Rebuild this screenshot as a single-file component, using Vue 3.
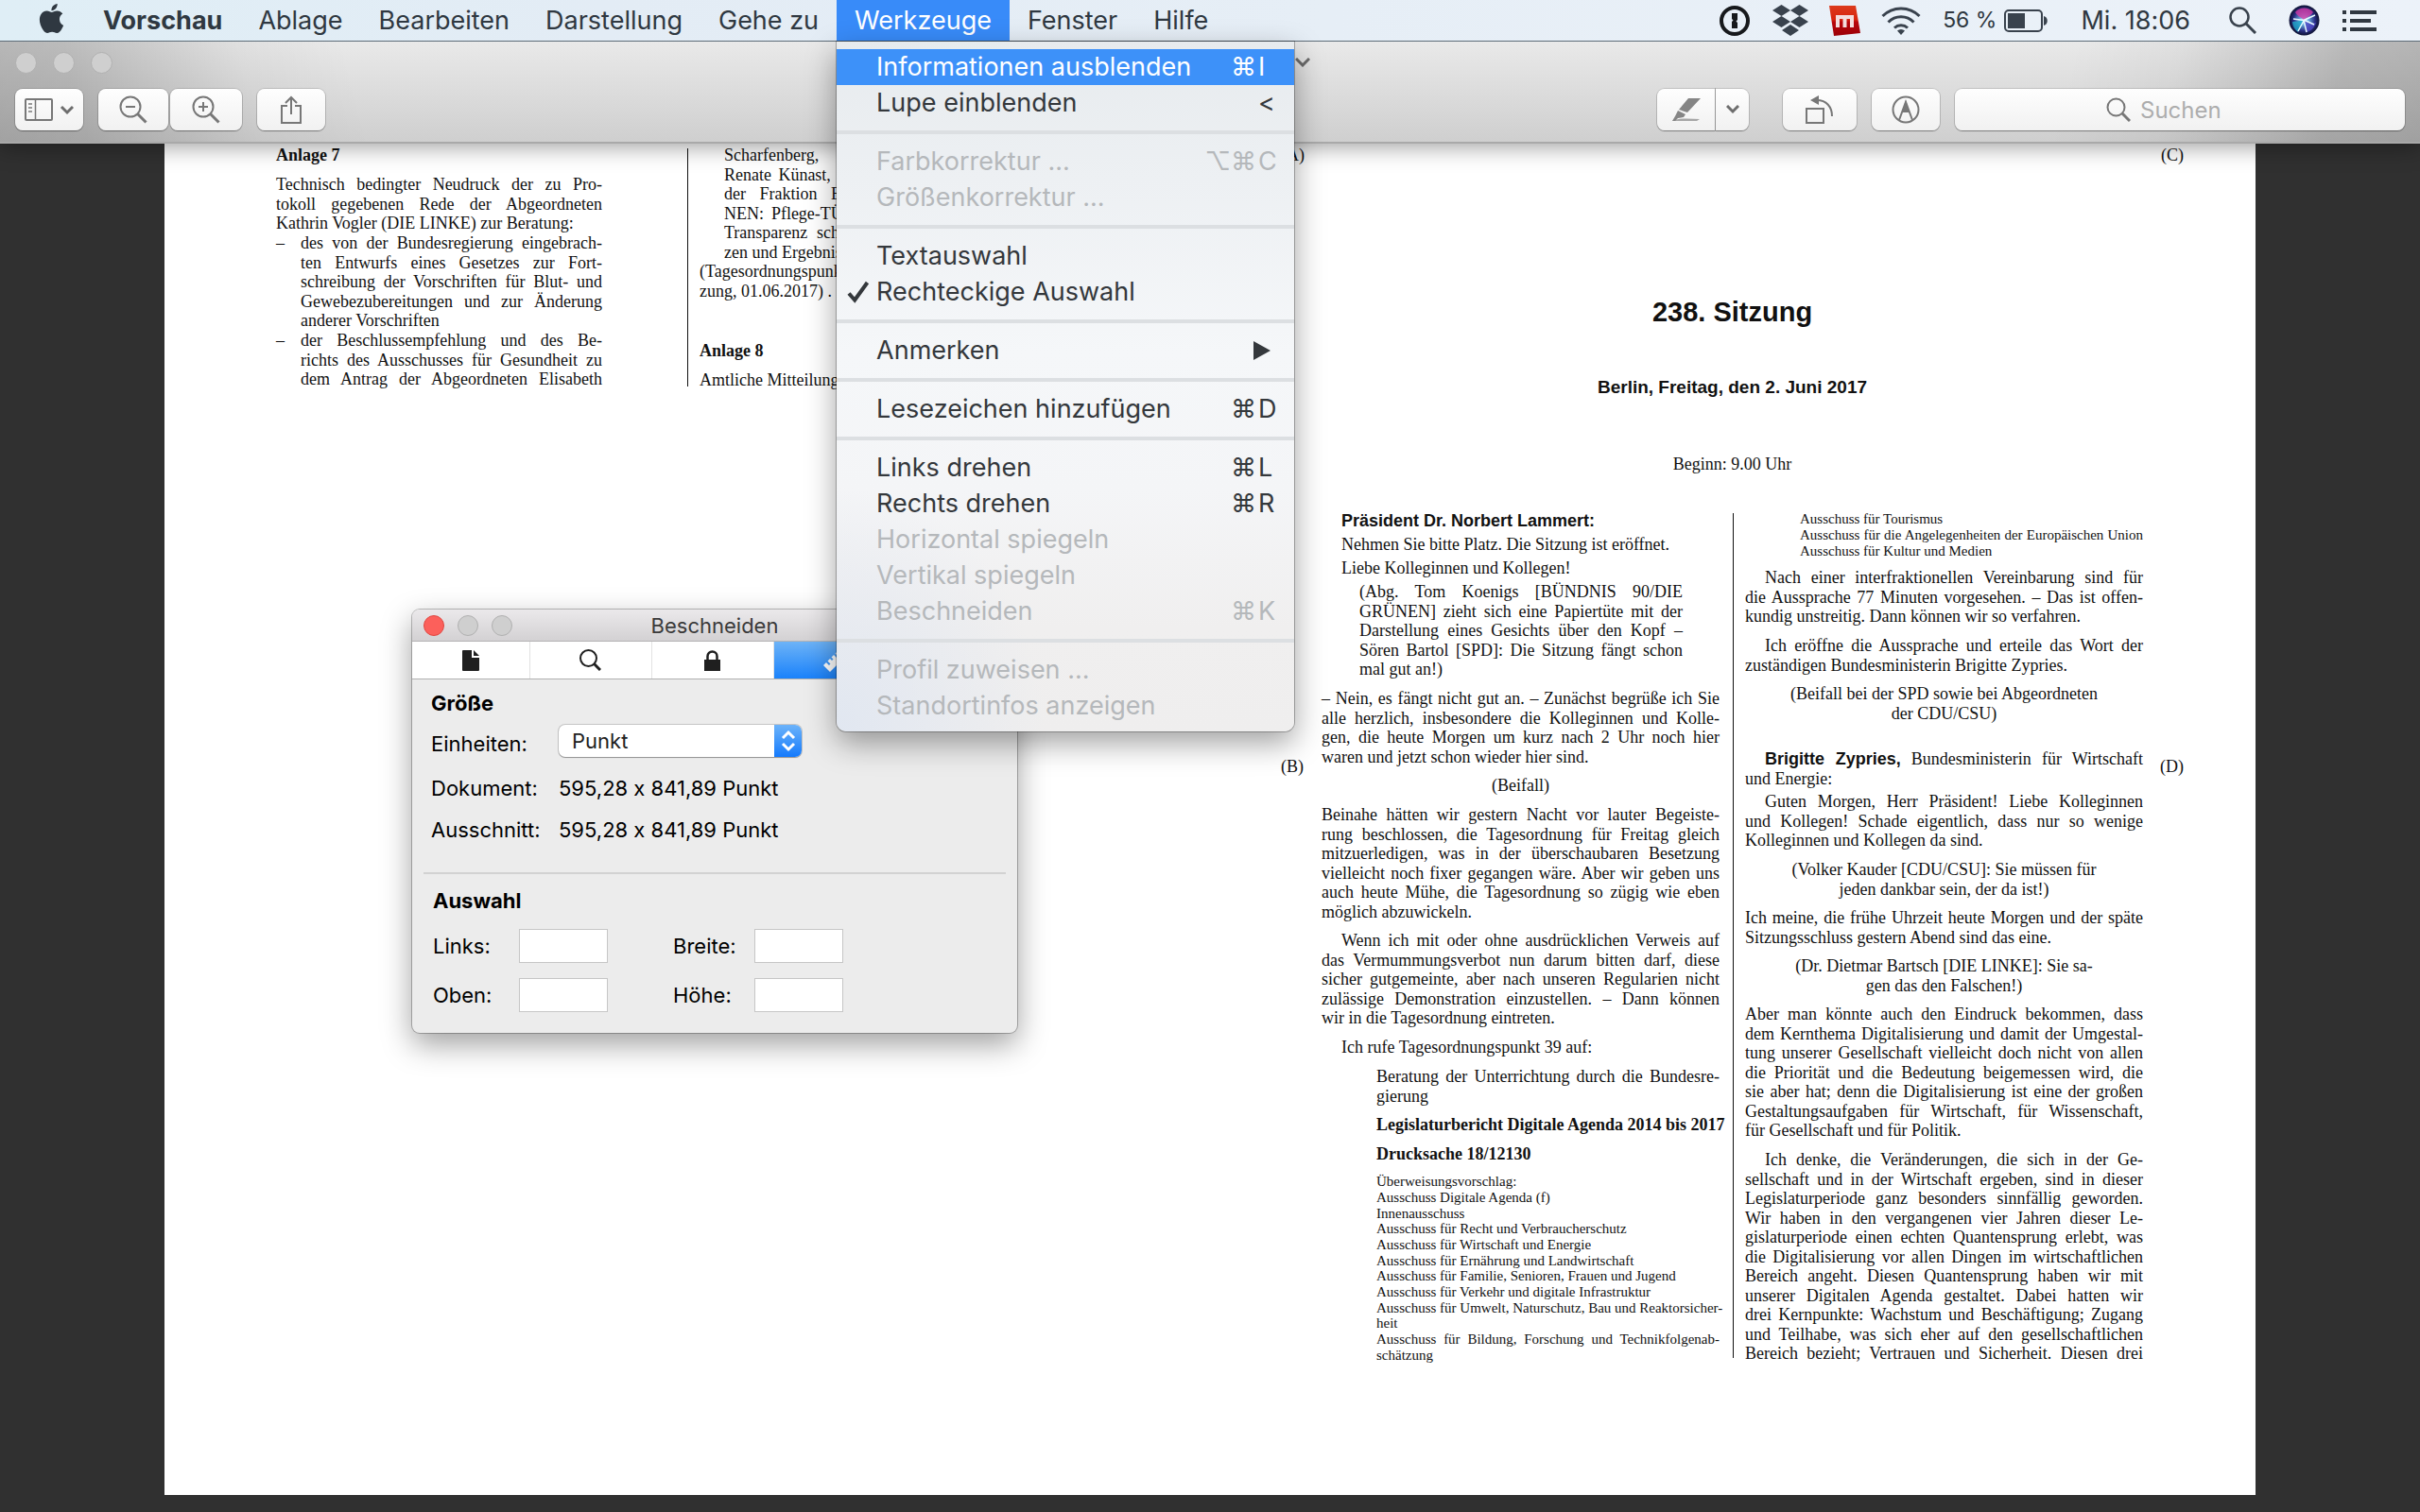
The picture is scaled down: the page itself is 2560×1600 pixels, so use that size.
<script setup>
import { ref } from 'vue'

const full = (text) => ({ text, full: true })

const menusBefore = ['Ablage', 'Bearbeiten', 'Darstellung', 'Gehe zu']
const menusAfter = ['Fenster', 'Hilfe']

const menuGroups = [
  [
    { label: 'Informationen ausblenden', mods: '⌘', key: 'I', active: true },
    { label: 'Lupe einblenden', key: '<' },
  ],
  [
    { label: 'Farbkorrektur ...', mods: '⌥⌘', key: 'C', disabled: true },
    { label: 'Größenkorrektur ...', disabled: true },
  ],
  [{ label: 'Textauswahl' }, { label: 'Rechteckige Auswahl', checked: true }],
  [{ label: 'Anmerken', submenu: true }],
  [{ label: 'Lesezeichen hinzufügen', mods: '⌘', key: 'D' }],
  [
    { label: 'Links drehen', mods: '⌘', key: 'L' },
    { label: 'Rechts drehen', mods: '⌘', key: 'R' },
    { label: 'Horizontal spiegeln', disabled: true },
    { label: 'Vertikal spiegeln', disabled: true },
    { label: 'Beschneiden', mods: '⌘', key: 'K', disabled: true },
  ],
  [
    { label: 'Profil zuweisen ...', disabled: true },
    { label: 'Standortinfos anzeigen', disabled: true },
  ],
]

const annexLeft = [
  { kind: 'strong', lines: ['Anlage 7'] },
  {
    kind: 'text',
    lines: [
      'Technisch bedingter Neudruck der zu Pro-',
      'tokoll gegebenen Rede der Abgeordneten',
      'Kathrin Vogler (DIE LINKE) zur Beratung:',
    ],
  },
  {
    kind: 'dash',
    lines: [
      'des von der Bundesregierung eingebrach-',
      'ten Entwurfs eines Gesetzes zur Fort-',
      'schreibung der Vorschriften für Blut- und',
      'Gewebezubereitungen und zur Änderung',
      'anderer Vorschriften',
    ],
  },
  {
    kind: 'dash',
    lines: [
      'der Beschlussempfehlung und des Be-',
      'richts des Ausschusses für Gesundheit zu',
      full('dem Antrag der Abgeordneten Elisabeth'),
    ],
  },
]

const annexRight = [
  {
    kind: 'inset',
    lines: [
      'Scharfenberg, Maria Klein-Schmeink,',
      'Renate Künast, weiterer Abgeordneter und',
      'der Fraktion BÜNDNIS 90/DIE GRÜ-',
      'NEN: Pflege-TÜV hat ausgedient – Echte',
      'Transparenz schaffen: Pflegenoten ausset-',
      'zen und Ergebnisqualität voranbringen',
    ],
  },
  { kind: 'flush', lines: ['(Tagesordnungspunkt 25 a, 237. Sit-', 'zung, 01.06.2017) . . . . . .'] },
  { kind: 'strong annex', lines: ['Anlage 8'] },
  { kind: 'text', lines: ['Amtliche Mitteilungen'] },
]

const columnLeft = [
  { kind: 'name', lines: ['Präsident Dr. Norbert Lammert:'] },
  { kind: 'indent tight', lines: ['Nehmen Sie bitte Platz. Die Sitzung ist eröffnet.'] },
  { kind: 'indent tight', lines: ['Liebe Kolleginnen und Kollegen!'] },
  {
    kind: 'aside tight',
    lines: [
      '(Abg. Tom Koenigs [BÜNDNIS 90/DIE',
      'GRÜNEN] zieht sich eine Papiertüte mit der',
      'Darstellung eines Gesichts über den Kopf –',
      'Sören Bartol [SPD]: Die Sitzung fängt schon',
      'mal gut an!)',
    ],
  },
  {
    kind: 'text',
    lines: [
      '– Nein, es fängt nicht gut an. – Zunächst begrüße ich Sie',
      'alle herzlich, insbesondere die Kolleginnen und Kolle-',
      'gen, die heute Morgen um kurz nach 2 Uhr noch hier',
      'waren und jetzt schon wieder hier sind.',
    ],
  },
  { kind: 'call', lines: ['(Beifall)'] },
  {
    kind: 'text',
    lines: [
      'Beinahe hätten wir gestern Nacht vor lauter Begeiste-',
      'rung beschlossen, die Tagesordnung für Freitag gleich',
      'mitzuerledigen, was in der überschaubaren Besetzung',
      'vielleicht noch fixer gegangen wäre. Aber wir geben uns',
      'auch heute Mühe, die Tagesordnung so zügig wie eben',
      'möglich abzuwickeln.',
    ],
  },
  {
    kind: 'indent',
    lines: [
      'Wenn ich mit oder ohne ausdrücklichen Verweis auf',
      'das Vermummungsverbot nun darum bitten darf, diese',
      'sicher gutgemeinte, aber nach unseren Regularien nicht',
      'zulässige Demonstration einzustellen. – Dann können',
      'wir in die Tagesordnung eintreten.',
    ],
  },
  { kind: 'indent', lines: ['Ich rufe Tagesordnungspunkt 39 auf:'] },
  { kind: 'item', lines: ['Beratung der Unterrichtung durch die Bundesre-', 'gierung'] },
  { kind: 'item strong', lines: [full('Legislaturbericht Digitale Agenda 2014 bis 2017')] },
  { kind: 'item strong', lines: ['Drucksache 18/12130'] },
  {
    kind: 'item small',
    lines: [
      'Überweisungsvorschlag:',
      'Ausschuss Digitale Agenda (f)',
      'Innenausschuss',
      'Ausschuss für Recht und Verbraucherschutz',
      'Ausschuss für Wirtschaft und Energie',
      'Ausschuss für Ernährung und Landwirtschaft',
      'Ausschuss für Familie, Senioren, Frauen und Jugend',
      'Ausschuss für Verkehr und digitale Infrastruktur',
      full('Ausschuss für Umwelt, Naturschutz, Bau und Reaktorsicher-'),
      'heit',
      full('Ausschuss für Bildung, Forschung und Technikfolgenab-'),
      'schätzung',
    ],
  },
]

const columnRight = [
  {
    kind: 'item small',
    lines: [
      'Ausschuss für Tourismus',
      full('Ausschuss für die Angelegenheiten der Europäischen Union'),
      'Ausschuss für Kultur und Medien',
    ],
  },
  {
    kind: 'indent',
    lines: [
      'Nach einer interfraktionellen Vereinbarung sind für',
      'die Aussprache 77 Minuten vorgesehen. – Das ist offen-',
      'kundig unstreitig. Dann können wir so verfahren.',
    ],
  },
  {
    kind: 'indent',
    lines: [
      'Ich eröffne die Aussprache und erteile das Wort der',
      'zuständigen Bundesministerin Brigitte Zypries.',
    ],
  },
  { kind: 'call', lines: ['(Beifall bei der SPD sowie bei Abgeordneten', 'der CDU/CSU)'] },
  {
    kind: 'indent speaker',
    lines: [
      { name: 'Brigitte Zypries,', text: 'Bundesministerin für Wirtschaft' },
      'und Energie:',
    ],
  },
  {
    kind: 'indent tight',
    lines: [
      'Guten Morgen, Herr Präsident! Liebe Kolleginnen',
      'und Kollegen! Schade eigentlich, dass nur so wenige',
      'Kolleginnen und Kollegen da sind.',
    ],
  },
  { kind: 'call', lines: ['(Volker Kauder [CDU/CSU]: Sie müssen für', 'jeden dankbar sein, der da ist!)'] },
  {
    kind: 'text',
    lines: [
      'Ich meine, die frühe Uhrzeit heute Morgen und der späte',
      'Sitzungsschluss gestern Abend sind das eine.',
    ],
  },
  { kind: 'call', lines: ['(Dr. Dietmar Bartsch [DIE LINKE]: Sie sa-', 'gen das den Falschen!)'] },
  {
    kind: 'text',
    lines: [
      'Aber man könnte auch den Eindruck bekommen, dass',
      'dem Kernthema Digitalisierung und damit der Umgestal-',
      'tung unserer Gesellschaft vielleicht doch nicht von allen',
      'die Priorität und die Bedeutung beigemessen wird, die',
      'sie aber hat; denn die Digitalisierung ist eine der großen',
      'Gestaltungsaufgaben für Wirtschaft, für Wissenschaft,',
      'für Gesellschaft und für Politik.',
    ],
  },
  {
    kind: 'indent',
    lines: [
      'Ich denke, die Veränderungen, die sich in der Ge-',
      'sellschaft und in der Wirtschaft ergeben, sind in dieser',
      'Legislaturperiode ganz besonders sinnfällig geworden.',
      'Wir haben in den vergangenen vier Jahren dieser Le-',
      'gislaturperiode einen echten Quantensprung erlebt, was',
      'die Digitalisierung vor allen Dingen im wirtschaftlichen',
      'Bereich angeht. Diesen Quantensprung haben wir mit',
      'unserer Digitalen Agenda gestaltet. Dabei hatten wir',
      'drei Kernpunkte: Wachstum und Beschäftigung; Zugang',
      'und Teilhabe, was sich eher auf den gesellschaftlichen',
      full('Bereich bezieht; Vertrauen und Sicherheit. Diesen drei'),
    ],
  },
]

const unit = ref('Punkt')
const selection = ref({ left: '', width: '', top: '', height: '' })
const query = ref('')
</script>

<template>
  <div class="desktop">
    <header class="menubar">
      <nav class="menus" aria-label="Menüleiste">
        <button class="apple" aria-label="Apple">
          <svg width="31" height="31" viewBox="0 0 24 24" fill="currentColor"><path d="M12.152 6.896c-.948 0-2.415-1.078-3.96-1.04-2.04.027-3.91 1.183-4.961 3.014-2.117 3.675-.546 9.103 1.519 12.09 1.013 1.454 2.208 3.09 3.792 3.039 1.52-.065 2.09-.987 3.935-.987 1.831 0 2.35.987 3.96.948 1.637-.026 2.676-1.48 3.676-2.948 1.156-1.688 1.636-3.325 1.662-3.415-.039-.013-3.182-1.221-3.22-4.857-.026-3.04 2.48-4.494 2.597-4.559-1.429-2.09-3.623-2.324-4.39-2.376-2-.156-3.675 1.09-4.61 1.09zM15.53 3.83c.843-1.012 1.4-2.427 1.245-3.83-1.207.052-2.662.805-3.532 1.818-.78.896-1.454 2.338-1.273 3.714 1.338.104 2.715-.688 3.559-1.701" /></svg>
        </button>
        <button class="menu app-name">Vorschau</button>
        <button v-for="m in menusBefore" :key="m" class="menu">{{ m }}</button>
        <div class="open-menu">
          <button class="menu is-open">Werkzeuge</button>
          <div class="dropdown" role="menu">
            <div v-for="(group, g) in menuGroups" :key="g" class="group" role="group">
              <button
                v-for="item in group"
                :key="item.label"
                class="entry"
                :class="{ active: item.active }"
                :disabled="item.disabled"
                role="menuitem"
              >
                <span class="mark">
                  <svg v-if="item.checked" width="24" height="24" viewBox="0 0 24 24" fill="none" stroke="currentColor" stroke-width="4"><path d="M2 13.500l6.200 7L21.500 2" /></svg>
                </span>
                <span class="label">{{ item.label }}</span>
                <span class="mods">{{ item.mods }}</span>
                <span class="key">
                  <svg v-if="item.submenu" class="arrow" width="18" height="20" viewBox="0 0 18 20" fill="currentColor"><path d="M0 0l18 10L0 20z" /></svg>
                  <template v-else>{{ item.key }}</template>
                </span>
              </button>
            </div>
          </div>
        </div>
        <button v-for="m in menusAfter" :key="m" class="menu">{{ m }}</button>
      </nav>
      <div class="status">
        <svg class="s-pass" width="32" height="32" viewBox="0 0 32 32"><circle cx="16" cy="16" r="14" fill="none" stroke="#17191c" stroke-width="4" /><path d="M13 8h6v7l-1.500 1.500L19 18v6h-6v-7l1.500-1.500L13 14z" fill="#17191c" /></svg>
        <svg class="s-box" width="38" height="34" viewBox="0 0 38 34" fill="#39424d"><path d="M9.500 0L19 6l-9.500 6L0 6zM28.500 0L38 6l-9.500 6L19 6zM9.500 12L19 18l-9.500 6L0 18zM28.500 12L38 18l-9.500 6L19 18zM19 21l9 6-9 6-9-6z" /></svg>
        <svg class="s-red" width="33" height="32" viewBox="0 0 33 32"><defs><linearGradient id="redbox" x1="0" y1="0" x2="0" y2="1"><stop offset="0" stop-color="#dc3a1c" /><stop offset=".45" stop-color="#d8260f" /><stop offset=".55" stop-color="#b8060b" /><stop offset="1" stop-color="#9c0007" /></linearGradient></defs><path d="M0 0h28l5 29-28 3z" fill="url(#redbox)" /><path d="M9 23V12h15v11M16.500 12v11" fill="none" stroke="#f3dede" stroke-width="4" /></svg>
        <svg class="s-wifi" width="42" height="30" viewBox="0 0 42 30" fill="none" stroke="#39424d" stroke-width="3"><path d="M1.500 10a27.500 27.500 0 0 1 39 0M7.500 16.500a19 19 0 0 1 27 0M14 22.500a10.500 10.500 0 0 1 14 0" /><path d="M17 25.500a6 6 0 0 1 8 0L21 30z" fill="#39424d" stroke="none" /></svg>
        <span class="percent">56 %</span>
        <svg class="s-bat" width="46" height="24" viewBox="0 0 46 24"><rect x="1" y="1" width="39" height="22" rx="4" fill="none" stroke="#39424d" stroke-width="2" /><rect x="4" y="4" width="18" height="16" fill="#39424d" /><path d="M42 7c5 1 5 9 0 10z" fill="#39424d" /></svg>
        <span class="clock">Mi. 18:06</span>
        <svg class="s-find" width="29" height="29" viewBox="0 0 29 29" fill="none" stroke="#39424d"><circle cx="11" cy="11" r="9.500" stroke-width="2.500" /><path d="M18 18l10 10" stroke-width="3" /></svg>
        <svg class="s-siri" width="33" height="33" viewBox="0 0 33 33"><defs><radialGradient id="siri" cx=".5" cy=".5" r=".5"><stop offset="0" stop-color="#fff" /><stop offset=".25" stop-color="#6fb7e6" /><stop offset=".7" stop-color="#2a2f86" /><stop offset="1" stop-color="#0c1030" /></radialGradient></defs><circle cx="16.500" cy="16.500" r="16" fill="url(#siri)" /><path d="M7 8C11 2 22 2 26 8c-3 4-7 6-10 8-3-3-7-4-9-8z" fill="#d23aa5" opacity=".8" /><path d="M4 18c4 0 8-1 12-2-1 5-3 9-6 13-4-3-6-7-6-11z" fill="#1fa8c9" opacity=".8" /><path d="M16 16c3 3 9 4 13 3-2 6-6 9-10 10-1-4-2-8-3-13z" fill="#4f49c4" opacity=".8" /><path d="M5 15l11 1.500L28 11M16 17l-6 11M16 16l3 13M16 16l11 5" fill="none" stroke="#e8fbff" stroke-width="1.500" /></svg>
        <svg class="s-list" width="36" height="22" viewBox="0 0 36 22" fill="#303841"><path d="M0 0h4v4H0zM8 0h28v4H8zM0 9h4v4H0zM8 9h22v4H8zM0 18h4v4H0zM8 18h28v4H8z" /></svg>
      </div>
    </header>

    <div class="toolbar">
      <div class="title-row">
        <div class="lights"><i></i><i></i><i></i></div>
        <button class="doc-title" aria-label="Dokumenttitel">
          <svg width="16" height="10" viewBox="0 0 16 10" fill="none" stroke="#6b6b6b" stroke-width="3"><path d="M1 1l7 7 7-7" /></svg>
        </button>
      </div>
      <div class="tools">
        <button class="tool w-side" aria-label="Seitenleiste">
          <svg width="52" height="26" viewBox="0 0 52 26" fill="none" stroke="#777"><rect x="1" y="2" width="28" height="22" rx="1" stroke-width="2" /><path d="M11.500 2v22" stroke-width="1.500" /><path d="M4 7h4M4 11h4M4 15h4" stroke-width="2" stroke="#999" /><path d="M39 10l6 6 6-6" stroke-width="3" stroke="#6d6d6d" /></svg>
        </button>
        <button class="tool w-out" aria-label="Verkleinern">
          <svg width="30" height="30" viewBox="0 0 30 30" fill="none" stroke="#777" stroke-width="2"><circle cx="12" cy="12" r="10.500" /><path d="M7 12h10" /><path d="M19.500 19.500l9 9" stroke-width="3" /></svg>
        </button>
        <button class="tool w-in" aria-label="Vergrößern">
          <svg width="30" height="30" viewBox="0 0 30 30" fill="none" stroke="#777" stroke-width="2"><circle cx="12" cy="12" r="10.500" /><path d="M7 12h10M12 7v10" /><path d="M19.500 19.500l9 9" stroke-width="3" /></svg>
        </button>
        <button class="tool w-share" aria-label="Teilen">
          <svg width="24" height="30" viewBox="0 0 24 30" fill="none" stroke="#777" stroke-width="2"><path d="M8 11H2v18h20V11h-6M12 20V2M6 8l6-6 6 6" /></svg>
        </button>
        <span class="grow"></span>
        <div class="split">
          <button class="tool w-pen" aria-label="Hervorheben">
            <svg width="32" height="26" viewBox="0 0 32 26" fill="#858585"><path d="M18 1h13L17 16l-9-3zM7 14l8 4-2 3-6 1-3 3H1l3-5z" /><path d="M1 25c10-4 20-2 29-2l-3 2z" opacity=".7" /></svg>
          </button>
          <button class="tool w-drop" aria-label="Farbe wählen">
            <svg width="14" height="10" viewBox="0 0 14 10" fill="none" stroke="#6d6d6d" stroke-width="3"><path d="M1 1l6 6 6-6" /></svg>
          </button>
        </div>
        <button class="tool w-rot" aria-label="Drehen">
          <svg width="30" height="30" viewBox="0 0 30 30" fill="none" stroke="#777" stroke-width="2"><rect x="1" y="14" width="18" height="15" /><path d="M12 5c10 0 16 7 16 17" /><path d="M14 0v10L5 5z" fill="#777" stroke="none" /></svg>
        </button>
        <button class="tool w-mark" aria-label="Markieren">
          <svg width="30" height="30" viewBox="0 0 30 30" fill="none" stroke="#777" stroke-width="2"><circle cx="15" cy="15" r="13.500" /><path d="M8 26l7-19 7 19" /><path d="M15 5l4 13h-8z" fill="#777" stroke="none" /></svg>
        </button>
        <label class="tool search">
          <svg width="26" height="26" viewBox="0 0 26 26" fill="none" stroke="#777" stroke-width="2"><circle cx="10.500" cy="10.500" r="9" /><path d="M17 17l8 8" stroke-width="3" /></svg>
          <input v-model="query" type="text" placeholder="Suchen" aria-label="Suchen" />
        </label>
      </div>
    </div>

    <main class="viewer">
      <div class="spread">
        <section class="annex">
          <div class="column">
            <div v-for="(p, i) in annexLeft" :key="i" class="para" :class="p.kind">
              <span v-for="(l, j) in p.lines" :key="j" class="line" :class="{ full: l.full }">{{ l.text ?? l }}</span>
            </div>
          </div>
          <div class="rule"></div>
          <div class="column">
            <div v-for="(p, i) in annexRight" :key="i" class="para" :class="p.kind">
              <span v-for="(l, j) in p.lines" :key="j" class="line" :class="{ full: l.full }">{{ l.text ?? l }}</span>
            </div>
          </div>
        </section>

        <section class="protocol">
          <span class="margin">(A)</span>
          <div class="heading">
            <h1>238. Sitzung</h1>
            <h2>Berlin, Freitag, den 2. Juni 2017</h2>
            <p>Beginn: 9.00 Uhr</p>
          </div>
          <span class="margin right">(C)</span>
          <span class="margin lower">(B)</span>
          <div class="column">
            <div v-for="(p, i) in columnLeft" :key="i" class="para" :class="p.kind">
              <span v-for="(l, j) in p.lines" :key="j" class="line" :class="{ full: l.full }">{{ l.text ?? l }}</span>
            </div>
          </div>
          <div class="rule"></div>
          <div class="column">
            <div v-for="(p, i) in columnRight" :key="i" class="para" :class="p.kind">
              <span v-for="(l, j) in p.lines" :key="j" class="line" :class="{ full: l.full }"><b v-if="l.name">{{ l.name }}</b>{{ l.name ? ' ' : '' }}{{ l.text ?? l }}</span>
            </div>
          </div>
          <span class="margin lower right">(D)</span>
        </section>
      </div>
    </main>

    <section class="inspector" aria-label="Beschneiden">
      <header class="caption">
        <div class="lights"><i class="close"></i><i></i><i></i></div>
        <span>Beschneiden</span>
      </header>
      <div class="tabs">
        <button aria-label="Allgemein">
          <svg width="18" height="22" viewBox="0 0 18 22" fill="#1f1f1f"><path d="M1 0h9v8h8v13a1 1 0 0 1-1 1H1a1 1 0 0 1-1-1V1a1 1 0 0 1 1-1z" /><path d="M12 0l6 6h-6z" /></svg>
        </button>
        <button aria-label="Suche">
          <svg width="23" height="23" viewBox="0 0 23 23" fill="none" stroke="#1f1f1f"><circle cx="9.500" cy="9.500" r="8.500" stroke-width="2" /><path d="M15.500 15.500l6.500 6.500" stroke-width="3" /></svg>
        </button>
        <button aria-label="Verschlüsselung">
          <svg width="17" height="22" viewBox="0 0 17 22"><rect y="10" width="17" height="12" fill="#1f1f1f" /><path d="M3.500 11V6.500a5 5 0 0 1 10 0V11" fill="none" stroke="#1f1f1f" stroke-width="2.500" /></svg>
        </button>
        <button class="current" aria-label="Beschneiden">
          <svg width="26" height="26" viewBox="0 0 26 26" fill="#fff"><path d="M1 18l3-3 3 3 1.500-1.500-3-3L8 11l2 2 1.500-1.500-2-2L12 7l3 3 1.500-1.500-3-3L18 1l7 7L8 25z" /></svg>
        </button>
        <button aria-label="Anmerkungen"></button>
      </div>
      <div class="pane">
        <h3>Größe</h3>
        <div class="field first">
          <label for="unit">Einheiten:</label>
          <span class="picker">
            <select id="unit" v-model="unit"><option>Punkt</option></select>
            <svg width="29" height="34" viewBox="0 0 29 34" fill="none" stroke="#fff" stroke-width="3"><path d="M9 14l6-6 6 6M9 20l6 6 6-6" /></svg>
          </span>
        </div>
        <div class="field"><span>Dokument:</span><span>595,28 x 841,89 Punkt</span></div>
        <div class="field"><span>Ausschnitt:</span><span>595,28 x 841,89 Punkt</span></div>
        <hr />
        <h3 class="inner">Auswahl</h3>
        <div class="bounds">
          <label for="b-left">Links:</label><input id="b-left" v-model="selection.left" type="text" />
          <label for="b-width">Breite:</label><input id="b-width" v-model="selection.width" type="text" />
          <label for="b-top">Oben:</label><input id="b-top" v-model="selection.top" type="text" />
          <label for="b-height">Höhe:</label><input id="b-height" v-model="selection.height" type="text" />
        </div>
      </div>
    </section>
  </div>
</template>

<style>
body {
  background: #303030;
}
</style>

<style scoped>
* {
  box-sizing: border-box;
}

.desktop {
  position: relative;
  display: flex;
  flex-direction: column;
  min-height: 100vh;
  overflow: hidden;
  font-family: Inter, "Liberation Sans", sans-serif;
  font-variant-ligatures: no-contextual;
}

button,
input,
select {
  margin: 0;
  padding: 0;
  border: 0;
  background: none;
  color: inherit;
  font: inherit;
}

svg {
  display: block;
  flex: none;
}

h1,
h2,
h3,
p {
  margin: 0;
}

/* Menu bar */
.menubar {
  position: relative;
  z-index: 3;
  display: flex;
  justify-content: space-between;
  height: 44px;
  border-bottom: 1px solid #5d6c78;
  background: linear-gradient(90deg, #dfeef6, #e3ecf5 25%, #e6eef6 55%, #ecf2f9);
  color: #2f3841;
  font-size: 27px;
  line-height: 43px;
}

.menus,
.status {
  display: flex;
}

.apple {
  width: 90px;
  padding: 4px 0 0 39px;
  display: flex;
}

.menu {
  height: 43px;
  padding: 0 19px;
  white-space: nowrap;
}

.app-name {
  font-weight: 700;
}

.is-open {
  background: #388bf9;
  color: #fff;
}

.open-menu {
  position: relative;
}

.dropdown {
  position: absolute;
  top: 44px;
  left: 0;
  width: 484px;
  padding: 8px 0;
  border-radius: 0 0 10px 10px;
  background:
    radial-gradient(ellipse 220px 260px at 0 100%, #e1e7f1, #e1e7f100),
    linear-gradient(#e7ebee, #edf0f3 20%, #f5f7f9 45%, #f4f5f7 65%, #f0efef 85%, #efeeee);
  box-shadow: 0 0 0 1px #00000045, 0 12px 32px #00000060;
  color: #34383c;
}

.group + .group {
  margin-top: 10px;
  padding-top: 10px;
  border-top: 4px solid #dcdfe2;
}

.entry {
  display: flex;
  align-items: center;
  width: 100%;
  height: 38px;
  line-height: 38px;
  text-align: left;
}

.entry.active {
  background: #3d91f9;
  color: #fff;
}

.entry:disabled {
  color: #b5b8bb;
}

.mark {
  width: 42px;
  padding-left: 11px;
}

.label {
  flex: 1;
  white-space: nowrap;
}

.key {
  width: 38px;
}

.mods {
  padding-right: 2px;
}

.arrow {
  margin-left: -5px;
}

.status {
  align-items: center;
  padding-right: 46px;
}

.s-box { margin-left: 24px; }
.s-red { margin-left: 22px; }
.s-wifi { margin-left: 22px; }
.percent {
  margin-left: 23px;
  font-size: 23px;
}
.s-bat { margin-left: 8px; }
.clock { margin-left: 35px; }
.s-find { margin-left: 41px; }
.s-siri { margin-left: 34px; }
.s-list { margin-left: 24px; }

/* Window toolbar */
.toolbar {
  position: relative;
  z-index: 1;
  height: 108px;
  border-bottom: 2px solid #a9a9a9;
  background:
    linear-gradient(75deg, #00000038, #00000032 90px, #0000001c 190px, #0000000a 270px, #0000 380px),
    linear-gradient(285deg, #0000003a, #00000034 100px, #0000001c 190px, #0000000a 270px, #0000 380px),
    linear-gradient(#e9e9e9, #cfcfcf);
  box-shadow: 0 2px 24px #0000006b;
}

.title-row {
  display: grid;
  grid-template-columns: 1fr 212px 1fr;
  align-items: center;
  height: 44px;
  margin-bottom: 6px;
}

.lights {
  display: flex;
  gap: 17px;
  padding-left: 16px;
}

.lights i {
  width: 23px;
  height: 23px;
  border: 1px solid #b0b0b0;
  border-radius: 50%;
  background: #cfcfcf;
}

.doc-title {
  display: flex;
  justify-content: flex-end;
}

.tools {
  display: flex;
  padding: 0 16px;
}

.tool {
  display: flex;
  align-items: center;
  justify-content: center;
  height: 44px;
  border-radius: 8px;
  background: linear-gradient(#fefefe, #f1f1f1);
  box-shadow: 0 0 0 1px #00000022, 0 1px 1px #00000050;
}

.w-side { width: 72px; }
.w-out { width: 74px; margin-left: 16px; }
.w-in { width: 76px; margin-left: 2px; }
.w-share { width: 72px; margin-left: 16px; }
.w-rot { width: 78px; margin-left: 36px; }
.w-mark { width: 72px; margin-left: 16px; }

.grow {
  flex: 1;
}

.split {
  display: flex;
  gap: 1px;
}

.w-pen {
  width: 61px;
  border-radius: 8px 0 0 8px;
}

.w-drop {
  width: 35px;
  border-radius: 0 8px 8px 0;
}

.search {
  width: 476px;
  margin-left: 16px;
  gap: 10px;
}

.search input {
  width: 120px;
  outline: 0;
  font-size: 24px;
}

.search input::placeholder {
  color: #adadad;
  opacity: 1;
}

/* Document */
.viewer {
  display: flex;
  flex: 1;
  padding: 0 174px 18px;
  background: #303030;
}

.spread {
  display: flex;
  flex: 1;
  justify-content: space-between;
  align-items: flex-start;
  padding: 2px 76px 0 118px;
  background: #fff;
  color: #111;
  font-family: "Liberation Serif", serif;
  font-size: 18px;
  line-height: 21px;
}

.annex {
  display: grid;
  grid-template-columns: 345px 103px 345px;
}

.protocol {
  display: grid;
  grid-template-columns: 43px 421px 27px 421px 43px;
}

.rule {
  border-left: 1px solid #111;
}

.annex .rule {
  margin: 3px 0 4px 90px;
}

.protocol .rule {
  margin: 2px 0 6px 14px;
}

.heading {
  grid-column: span 3;
  padding: 159px 0 39px;
  text-align: center;
}

.heading h1 {
  font: 700 29px/34px "Liberation Sans", sans-serif;
}

.heading h2 {
  margin: 52px 0 61px;
  font: 700 19px/21px "Liberation Sans", sans-serif;
}

.margin.right {
  text-align: right;
}

.margin.lower {
  padding-top: 260px;
}

.para {
  margin-top: 10px;
}

.para:first-child {
  margin-top: 0;
}

.line {
  display: block;
  line-height: 21px;
  white-space: nowrap;
  text-align-last: justify;
}

.line:nth-child(even) {
  line-height: 20px;
}

.line:last-child {
  text-align-last: left;
}

.line.full {
  text-align-last: justify;
}

.tight {
  margin-top: 4px;
}

.strong {
  font-weight: 700;
}

.annex .para.annex {
  display: block;
  margin-top: 43px;
}

.dash,
.inset {
  margin-top: 0;
  padding-left: 26px;
}

.dash::before {
  content: "–";
  float: left;
  margin-left: -26px;
}

.flush {
  margin-top: 0;
}

.name,
.line b {
  font-family: "Liberation Sans", sans-serif;
  font-weight: 700;
}

.name,
.indent .line:first-child {
  padding-left: 21px;
}

.aside {
  padding: 0 39px 0 40px;
}

.call .line {
  text-align-last: center;
}

.item {
  padding-left: 58px;
}

.speaker {
  margin-top: 28px;
}

.small {
  font-size: 15px;
}

.small .line {
  line-height: 17px;
  text-align-last: left;
}

.small .line:nth-child(3n) {
  line-height: 16px;
}

.small .line.full {
  text-align-last: justify;
}

/* Inspector window */
.inspector {
  position: absolute;
  z-index: 2;
  top: 645px;
  left: 436px;
  width: 640px;
  border-radius: 8px;
  background: #ececec;
  box-shadow: 0 0 0 1px #00000040, 0 12px 32px #00000060;
  color: #000;
  font-size: 22px;
  line-height: 28px;
}

.caption {
  display: grid;
  grid-template-columns: 1fr auto 1fr;
  align-items: center;
  height: 34px;
  border-bottom: 1px solid #b5b3b5;
  border-radius: 8px 8px 0 0;
  background: linear-gradient(#ebe9eb, #d3d1d3);
  color: #3a3a3a;
}

.caption .lights {
  gap: 14px;
  padding-left: 12px;
}

.caption i {
  width: 22px;
  height: 22px;
}

.caption .close {
  border-color: #e14640;
  background: #fc605b;
}

.tabs {
  display: grid;
  grid-template-columns: 125px repeat(4, 1fr);
  height: 40px;
  border-bottom: 1px solid #b0b0b0;
  background: #fff;
}

.tabs button {
  display: flex;
  align-items: center;
  justify-content: center;
  border-right: 1px solid #e2e2e2;
}

.tabs .current {
  border: 0;
  background: linear-gradient(#6db3f7, #1a82fb);
}

.pane {
  padding: 11px 12px 22px;
}

.pane h3 {
  padding-left: 8px;
  font-size: 22px;
  font-weight: 700;
}

.pane .inner {
  padding-left: 10px;
}

.field {
  display: grid;
  grid-template-columns: 135px 1fr;
  align-items: end;
  height: 28px;
  margin-top: 16px;
  padding-left: 8px;
}

.field.first {
  height: 34px;
  margin-top: 9px;
  margin-bottom: 19px;
}

.picker {
  display: flex;
  width: 257px;
  height: 34px;
  border-radius: 7px;
  overflow: hidden;
  background: #fff;
  box-shadow: 0 0 0 1px #0000002a, 0 1px 1px #00000040;
}

.picker select {
  flex: 1;
  appearance: none;
  padding-left: 14px;
  color: #222;
}

.picker svg {
  background: linear-gradient(#6cb3fa, #147afc);
}

hr {
  height: 2px;
  margin: 31px 0 14px;
  border: 0;
  background: #d2d2d2;
}

.bounds {
  display: grid;
  grid-template-columns: 91px 94px 155px 94px;
  row-gap: 16px;
  align-items: center;
  margin-top: 16px;
  padding-left: 10px;
}

.bounds label:nth-of-type(even) {
  padding-left: 69px;
}

.bounds input {
  height: 36px;
  border: 1px solid #c6c6c6;
  background: #fff;
}
</style>
